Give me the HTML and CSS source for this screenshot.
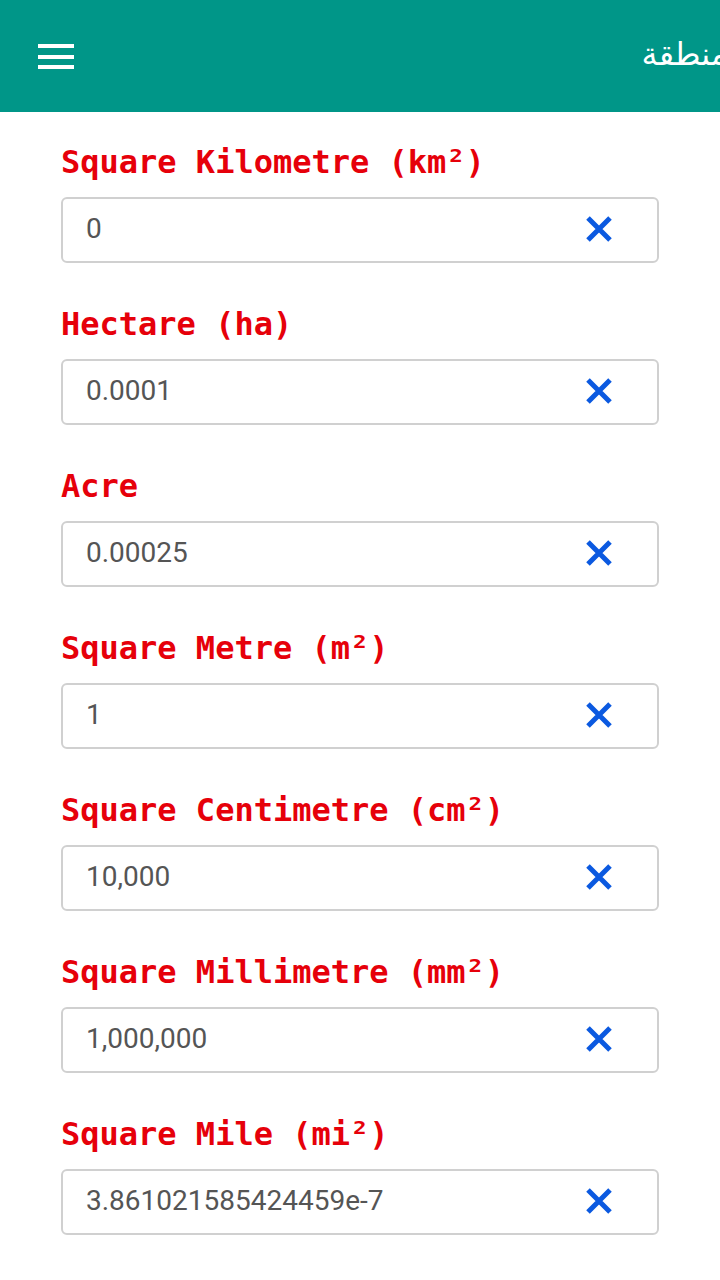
FILE: index.html
```html
<!DOCTYPE html>
<html lang="en">

<head>
    <meta charset="UTF-8">
    <title>منطقة</title>
    <link rel="stylesheet" href="styles.css">
</head>

<body>
    <div class="header">
        <a href="javascript:;" class="menu_btn">
            <span></span>
            <span></span>
            <span></span>
        </a>
        <h1 class="title">منطقة</h1>
    </div>
    <div class="content">
        <div class="field">
            <label>Square Kilometre (km²)</label>
            <div class="input_box">
                <span class="value">0</span>
                <a href="javascript:;" class="clear"><svg viewBox="0 0 28 28"><path d="M3 3L25 25M25 3L3 25" /></svg></a>
            </div>
        </div>
        <div class="field">
            <label>Hectare (ha)</label>
            <div class="input_box">
                <span class="value">0.0001</span>
                <a href="javascript:;" class="clear"><svg viewBox="0 0 28 28"><path d="M3 3L25 25M25 3L3 25" /></svg></a>
            </div>
        </div>
        <div class="field">
            <label>Acre</label>
            <div class="input_box">
                <span class="value">0.00025</span>
                <a href="javascript:;" class="clear"><svg viewBox="0 0 28 28"><path d="M3 3L25 25M25 3L3 25" /></svg></a>
            </div>
        </div>
        <div class="field">
            <label>Square Metre (m²)</label>
            <div class="input_box">
                <span class="value">1</span>
                <a href="javascript:;" class="clear"><svg viewBox="0 0 28 28"><path d="M3 3L25 25M25 3L3 25" /></svg></a>
            </div>
        </div>
        <div class="field">
            <label>Square Centimetre (cm²)</label>
            <div class="input_box">
                <span class="value">10,000</span>
                <a href="javascript:;" class="clear"><svg viewBox="0 0 28 28"><path d="M3 3L25 25M25 3L3 25" /></svg></a>
            </div>
        </div>
        <div class="field">
            <label>Square Millimetre (mm²)</label>
            <div class="input_box">
                <span class="value">1,000,000</span>
                <a href="javascript:;" class="clear"><svg viewBox="0 0 28 28"><path d="M3 3L25 25M25 3L3 25" /></svg></a>
            </div>
        </div>
        <div class="field">
            <label>Square Mile (mi²)</label>
            <div class="input_box">
                <span class="value">3.861021585424459e-7</span>
                <a href="javascript:;" class="clear"><svg viewBox="0 0 28 28"><path d="M3 3L25 25M25 3L3 25" /></svg></a>
            </div>
        </div>
    </div>
</body>

</html>
```

FILE: styles.css
```css
* {
    padding: 0;
    margin: 0;
    box-sizing: border-box;
}

body {
    width: 720px;
    height: 1280px;
    overflow: hidden;
    background-color: #fff;
    font-family: Roboto, "Noto Sans", sans-serif;
}

/* 顶部标题栏 */
.header {
    height: 112px;
    background-color: #009688;
    display: flex;
    align-items: center;
    justify-content: space-between;
    padding-left: 38px;
    overflow: hidden;
}

.menu_btn {
    width: 36px;
    height: 25px;
    display: flex;
    flex-direction: column;
    justify-content: space-between;
    margin-top: 1px;
}

.menu_btn span {
    display: block;
    height: 4px;
    background-color: #fff;
}

.title {
    color: #fff;
    font-family: "DejaVu Sans", "Noto Sans", sans-serif;
    font-size: 32px;
    font-weight: normal;
    margin-right: -8px;
    margin-top: -4px;
}

/* 单位列表 */
.content {
    padding: 30px 61px 0;
}

.field {
    margin-bottom: 41px;
}

.field label {
    display: block;
    height: 40px;
    line-height: 40px;
    font-family: "DejaVu Sans Mono", "Liberation Mono", monospace;
    font-size: 32px;
    font-weight: bold;
    color: #e6000a;
    margin-bottom: 15px;
    white-space: nowrap;
}

.input_box {
    height: 66px;
    border: 2px solid #d0d0d0;
    border-radius: 6px;
    display: flex;
    align-items: center;
    padding: 0 44px 3px 23px;
}

.value {
    flex: 1;
    font-size: 28px;
    color: #555;
}

.clear {
    width: 28px;
    height: 28px;
    display: block;
}

.clear svg {
    width: 28px;
    height: 28px;
    display: block;
}

.clear path {
    stroke: #0b59e0;
    stroke-width: 5;
    fill: none;
}
```
